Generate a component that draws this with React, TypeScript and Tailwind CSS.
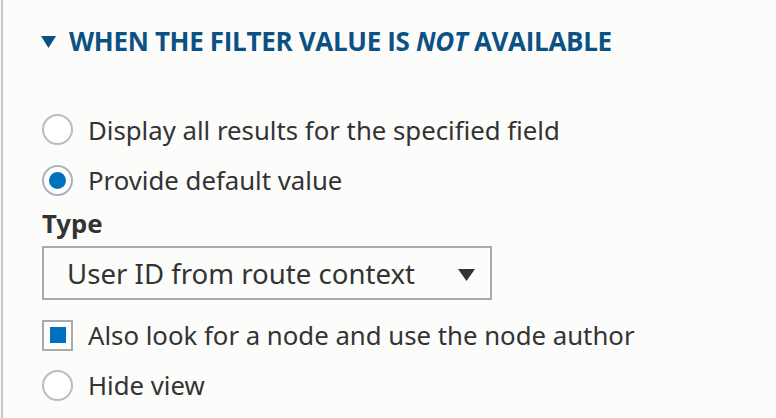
import React from "react";

function Radio({ checked }: { checked?: boolean }) {
  return (
    <span
      className={
        "flex h-[31px] w-[31px] shrink-0 items-center justify-center rounded-full border-2 bg-white " +
        (checked ? "border-[#a9b4bf]" : "border-[#bcbcbc]")
      }
    >
      {checked && <span className="h-[17px] w-[17px] rounded-full bg-[#0071c1]" />}
    </span>
  );
}

export default function App() {
  return (
    <div className="relative h-[418px] w-[776px] overflow-hidden bg-[#fcfcfa] font-['Noto_Sans',sans-serif] text-[25.75px] leading-[36px] text-[#333]">
      <div className="ml-px h-full border-l-2 border-[#c6c6c6] pl-[39px] pt-[23px]">
        <div className="flex items-center gap-[13px]">
          <svg width="15" height="12" viewBox="0 0 15 12" className="ml-[-1px] mt-[1px] shrink-0">
            <polygon points="0,0 15,0 7.5,12" fill="#0b5184" />
          </svg>
          <span className="font-['Open_Sans',sans-serif] text-[26px] font-bold tracking-[-0.32px] text-[#0b5184]">
            WHEN THE FILTER VALUE IS <em>NOT</em> AVAILABLE
          </span>
        </div>
        <div className="mt-[45px] flex h-[51px] items-center gap-[15px]">
          <Radio />
          <span>Display all results for the specified field</span>
        </div>
        <div className="flex h-[50px] items-center gap-[15px]">
          <Radio checked />
          <span>Provide default value</span>
        </div>
        <div className="font-bold">Type</div>
        <div className="mt-[5px] flex h-[54px] w-[450px] items-center justify-between border-2 border-[#a9a9a9] pl-[23px] pr-[15px]">
          <span className="text-[27.6px]">User ID from route context</span>
          <svg width="17" height="12" viewBox="0 0 17 12" className="mt-[4px]">
            <polygon points="0,0 17,0 8.5,12" fill="#333" />
          </svg>
        </div>
        <div className="mt-[10px] flex h-[50px] items-center gap-[15px]">
          <span className="flex h-[31px] w-[31px] shrink-0 items-center justify-center border-2 border-[#aaaaaa] bg-white">
            <span className="h-[16px] w-[16px] bg-[#0071c1]" />
          </span>
          <span>Also look for a node and use the node author</span>
        </div>
        <div className="flex h-[50px] items-center gap-[15px]">
          <Radio />
          <span>Hide view</span>
        </div>
      </div>
    </div>
  );
}
